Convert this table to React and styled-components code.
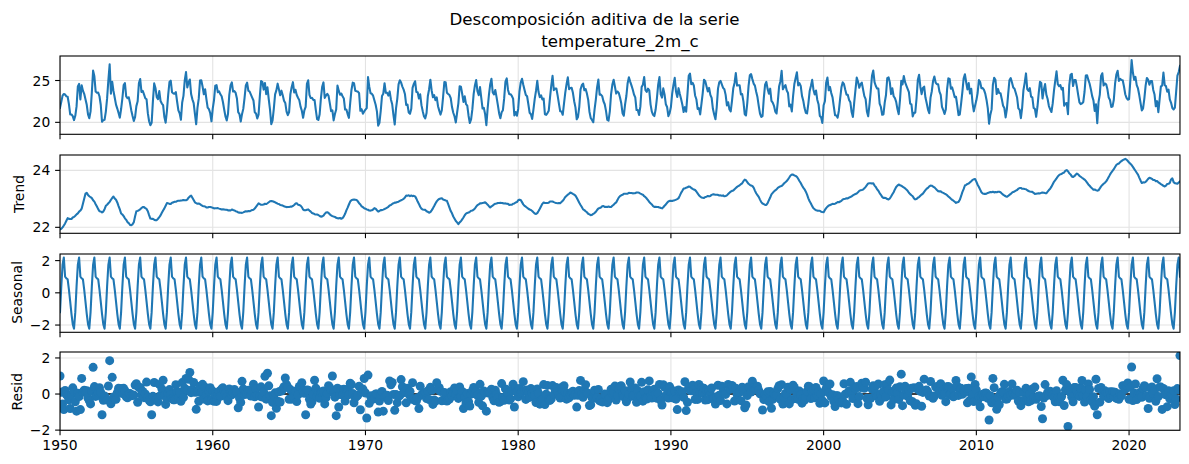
import React from 'react';
import styled, { createGlobalStyle } from 'styled-components';

const GlobalStyle = createGlobalStyle`
  html, body { margin: 0; padding: 0; background: #ffffff; }
  body { font-family: "DejaVu Sans", "Liberation Sans", sans-serif; color: #000; }
`;

const FIG_W = 1189;
const LABEL_COL = 35;
const AX_LEFT = 60 - LABEL_COL;
const AX_W = 1120;
const AX_H = 78.3;
const PANEL_H = 98.8;
const T0 = 1950;
const N = 881;
const T1 = T0 + (N - 1) / 12;
const BLUE = '#1f77b4';
const TICK = 4.9;
const PAD = 4.9;
const FS = 13.9;

function mulberry32(a) {
  return function () {
    a |= 0; a = (a + 0x6d2b79f5) | 0;
    let t = Math.imul(a ^ (a >>> 15), 1 | a);
    t = (t + Math.imul(t ^ (t >>> 7), 61 | t)) ^ t;
    return ((t ^ (t >>> 14)) >>> 0) / 4294967296;
  };
}
const rand = mulberry32(20240611);
const gauss = () => {
  const u = Math.max(rand(), 1e-9);
  const v = rand();
  return Math.sqrt(-2 * Math.log(u)) * Math.cos(2 * Math.PI * v);
};

const TREND_KEYS = [
  [1950.0, 21.93], [1950.3, 22.1], [1950.5, 22.32], [1950.7, 22.27], [1951.0, 22.4], [1951.4, 22.6],
  [1951.7, 23.23], [1952.0, 23.05], [1952.3, 22.85], [1952.6, 22.55], [1952.8, 22.5], [1953.0, 22.75],
  [1953.5, 23.07], [1953.7, 22.95], [1954.0, 22.5], [1954.3, 22.3], [1954.6, 22.08], [1954.8, 22.1],
  [1955.0, 22.55], [1955.5, 22.7], [1955.7, 22.65], [1955.9, 22.3], [1956.3, 22.22], [1956.6, 22.45],
  [1957.0, 22.85], [1957.2, 22.8], [1957.4, 22.88], [1957.9, 22.92], [1958.3, 22.95], [1958.6, 23.1],
  [1958.85, 22.85], [1959.6, 22.7], [1960.0, 22.72], [1960.5, 22.65], [1961.3, 22.6], [1961.9, 22.5],
  [1962.3, 22.6], [1962.7, 22.62], [1963.0, 22.85], [1963.5, 22.8], [1963.8, 22.95], [1964.2, 22.85],
  [1964.9, 22.68], [1965.06, 22.7], [1965.5, 22.86], [1965.93, 22.63], [1966.15, 22.66], [1966.7, 22.43],
  [1967.24, 22.41], [1967.46, 22.55], [1967.9, 22.37], [1968.44, 22.26], [1968.66, 22.49], [1968.99, 22.93],
  [1969.43, 22.93], [1969.75, 22.72], [1970.3, 22.6], [1970.62, 22.66], [1970.84, 22.55], [1971.39, 22.66],
  [1971.83, 22.84], [1972.26, 22.9], [1972.7, 23.13], [1973.24, 23.1], [1973.68, 22.66], [1974.23, 22.51],
  [1974.66, 22.9], [1974.99, 23.03], [1975.32, 22.95], [1975.75, 22.37], [1976.08, 22.08], [1976.63, 22.51],
  [1977.06, 22.6], [1977.5, 22.84], [1977.83, 22.9], [1978.15, 22.72], [1978.7, 22.87], [1979.25, 22.84],
  [1979.58, 22.81], [1980.12, 22.95], [1980.56, 22.7], [1981.2, 22.4], [1981.64, 22.86], [1982.3, 22.9],
  [1982.74, 22.84], [1982.95, 22.98], [1983.39, 23.19], [1983.7, 23.15], [1984.25, 22.6], [1984.8, 22.41],
  [1985.47, 22.72], [1986.12, 22.72], [1986.56, 23.01], [1987.0, 23.21], [1987.54, 23.19], [1987.87, 23.21],
  [1988.41, 23.01], [1988.85, 22.72], [1989.4, 22.7], [1989.83, 22.9], [1990.48, 23.01], [1990.81, 23.33],
  [1991.14, 23.44], [1991.58, 23.3], [1992.12, 22.98], [1992.45, 23.13], [1993.0, 23.15], [1993.54, 23.07],
  [1994.08, 23.3], [1994.85, 23.67], [1995.4, 23.42], [1995.94, 22.84], [1996.27, 22.81], [1996.81, 23.3],
  [1997.25, 23.44], [1997.9, 23.83], [1998.23, 23.8], [1998.78, 23.3], [1999.32, 22.66], [1999.65, 22.58],
  [1999.98, 22.52], [2000.31, 22.78], [2000.74, 22.81], [2001.18, 22.95], [2001.73, 23.07], [2002.27, 23.24],
  [2002.6, 23.33], [2002.93, 23.53], [2003.25, 23.53], [2003.91, 23.01], [2004.34, 23.03], [2004.89, 23.51],
  [2005.33, 23.36], [2005.98, 22.98], [2006.52, 23.19], [2006.96, 23.48], [2007.6, 23.28], [2008.16, 23.07],
  [2008.65, 22.86], [2008.93, 22.98], [2009.25, 23.48], [2009.91, 23.72], [2010.35, 23.19], [2011.0, 23.2],
  [2011.55, 23.25], [2011.99, 23.07], [2012.86, 23.39], [2013.3, 23.3], [2013.84, 23.19], [2014.6, 23.19],
  [2015.36, 23.8], [2015.91, 24.0], [2016.3, 23.75], [2016.57, 23.9], [2017.11, 23.68], [2017.66, 23.31],
  [2018.0, 23.32], [2018.53, 23.64], [2019.19, 24.2], [2019.73, 24.42], [2020.2, 24.15], [2020.6, 23.84],
  [2020.82, 23.54], [2021.0, 23.56], [2021.37, 23.75], [2022.02, 23.54], [2022.35, 23.4], [2022.7, 23.6],
  [2022.79, 23.8], [2022.94, 23.54], [2023.34, 23.54],
];

const SEASON = [-1.2, 0.4, 1.75, 2.19, 1.0, 0.9, 0.84, 0.2, -0.55, -1.3, -1.95, -2.23];

const OUTLIERS = [
  [1950.0, 1.0], [1950.7, -0.8], [1951.1, -0.95], [1952.18, 1.48], [1952.77, -1.15], [1953.23, 1.85],
  [1956.0, -1.15], [1958.5, 1.2], [1958.9, -0.85], [1963.4, 0.98], [1963.6, 1.15], [1963.8, -1.2],
  [1966.1, -1.15], [1967.8, 1.0], [1968.1, -1.2], [1970.1, -1.33], [1970.2, 1.05], [1970.84, -1.0],
  [1971.2, -0.95], [2005.1, 1.1], [2009.65, 0.95], [2010.85, -1.44], [2011.3, -0.85], [2014.3, -1.37],
  [2016.02, -1.8], [2016.9, 0.75], [2017.9, -1.15], [2020.2, 1.5], [2021.8, 0.85], [2023.33, 2.13],
];

function interp(t) {
  for (let k = 0; k < TREND_KEYS.length - 1; k++) {
    const [a, va] = TREND_KEYS[k];
    const [b, vb] = TREND_KEYS[k + 1];
    if (t >= a && t <= b) return va + ((t - a) / (b - a)) * (vb - va);
  }
  return TREND_KEYS[TREND_KEYS.length - 1][1];
}

const times = Array.from({ length: N }, (_, i) => T0 + i / 12);
const jitter = times.map(() => gauss() * 0.03);
const trend = times.map((t, i) => {
  const j = (jitter[Math.max(0, i - 1)] + jitter[i] + jitter[Math.min(N - 1, i + 1)]) / 3;
  return interp(t) + (i === 0 ? 0 : j);
});
const seasonal = times.map((_, i) => SEASON[i % 12]);
const drawResid = () => {
  let v = gauss() * 0.36;
  let tries = 0;
  while (Math.abs(v) > 0.95 && tries < 6) { v = gauss() * 0.36; tries++; }
  return Math.max(-0.95, Math.min(0.95, v));
};
const resid = times.map(() => drawResid());
OUTLIERS.forEach(([t, v]) => {
  const idx = Math.min(N - 1, Math.round((t - T0) * 12));
  resid[idx] = v;
});
const observed = times.map((_, i) => trend[i] + seasonal[i] + resid[i]);

const xOf = (t) => AX_LEFT + ((t - T0) / (T1 - T0)) * AX_W;
const XTICKS = [1950, 1960, 1970, 1980, 1990, 2000, 2010, 2020];
const fmt = (v) => (v < 0 ? '\u2212' + Math.abs(v) : String(v));

const Figure = styled.div`
  width: ${FIG_W}px;
  height: 464px;
  display: flex;
  flex-direction: column;
  background: #ffffff;
  overflow: hidden;
`;

const Header = styled.header`
  box-sizing: border-box;
  height: 56px;
  padding-top: 10px;
  display: flex;
  flex-direction: column;
`;

const SupTitle = styled.h1`
  margin: 0;
  font-weight: normal;
  font-size: 16.67px;
  line-height: 19.4px;
  text-align: center;
  width: ${FIG_W}px;
`;

const AxTitle = styled.h2`
  margin: 2.6px 0 0 60px;
  font-weight: normal;
  font-size: 16.67px;
  line-height: 19.4px;
  text-align: center;
  width: ${AX_W}px;
`;

const Panel = styled.section`
  display: grid;
  grid-template-columns: ${LABEL_COL}px 1fr;
  height: ${(p) => p.$h}px;
  flex: none;
`;

const YLabelCell = styled.div`
  height: ${AX_H}px;
  display: flex;
  align-items: center;
  justify-content: flex-start;
  padding-left: ${(p) => p.$inset}px;
  box-sizing: border-box;
`;

const YLabel = styled.span`
  writing-mode: vertical-rl;
  transform: rotate(180deg);
  font-size: ${FS}px;
  line-height: 16px;
  white-space: nowrap;
`;

const ChartSvg = styled.svg`
  display: block;
  overflow: visible;
`;

const TickText = styled.text`
  font-family: "DejaVu Sans", "Liberation Sans", sans-serif;
  font-size: ${FS}px;
  fill: #000;
`;

function Axes({ id, series, ylim, yticks, dots, xlabels, height, zeroLine }) {
  const [y0, y1] = ylim;
  const yOf = (v) => ((y1 - v) / (y1 - y0)) * AX_H;
  const width = FIG_W - LABEL_COL;
  const path = series
    .map((v, i) => `${i ? 'L' : 'M'}${xOf(times[i]).toFixed(2)} ${yOf(v).toFixed(2)}`)
    .join('');
  return (
    <ChartSvg width={width} height={height} viewBox={`0 0 ${width} ${height}`}>
      <defs>
        <clipPath id={id}>
          <rect x={AX_LEFT} y={0} width={AX_W} height={AX_H} />
        </clipPath>
      </defs>
      {XTICKS.map((t) => (
        <line key={'gx' + t} x1={xOf(t)} x2={xOf(t)} y1={0} y2={AX_H} stroke="#e3e3e3" strokeWidth={1.1} />
      ))}
      {yticks.map((v) => (
        <line key={'gy' + v} x1={AX_LEFT} x2={AX_LEFT + AX_W} y1={yOf(v)} y2={yOf(v)} stroke="#e3e3e3" strokeWidth={1.1} />
      ))}
      <g clipPath={`url(#${id})`}>
        {zeroLine && (
          <line x1={AX_LEFT} x2={AX_LEFT + AX_W} y1={yOf(0)} y2={yOf(0)} stroke="#000" strokeWidth={1.5} />
        )}
        {dots ? (
          series.map((v, i) => <circle key={i} cx={xOf(times[i])} cy={yOf(v)} r={4.5} fill={BLUE} />)
        ) : (
          <path d={path} fill="none" stroke={BLUE} strokeWidth={2.08} strokeLinejoin="round" strokeLinecap="square" />
        )}
      </g>
      {XTICKS.map((t) => (
        <line key={'tx' + t} x1={xOf(t)} x2={xOf(t)} y1={AX_H} y2={AX_H + TICK} stroke="#000" strokeWidth={1.1} />
      ))}
      {yticks.map((v) => (
        <line key={'ty' + v} x1={AX_LEFT - TICK} x2={AX_LEFT} y1={yOf(v)} y2={yOf(v)} stroke="#000" strokeWidth={1.1} />
      ))}
      <rect x={AX_LEFT} y={0} width={AX_W} height={AX_H} fill="none" stroke="#000" strokeWidth={1.1} />
      {yticks.map((v) => (
        <TickText key={'ly' + v} x={AX_LEFT - TICK - PAD} y={yOf(v) + 5.07} textAnchor="end">
          {fmt(v)}
        </TickText>
      ))}
      {xlabels &&
        XTICKS.map((t) => (
          <TickText key={'lx' + t} x={xOf(t)} y={AX_H + TICK + PAD + 10.1} textAnchor="middle">
            {t}
          </TickText>
        ))}
    </ChartSvg>
  );
}

const PANELS = [
  { id: 'obs', label: '', inset: 0, series: observed, ylim: [18.57, 27.93], yticks: [20, 25] },
  { id: 'trend', label: 'Trend', inset: 11.2, series: trend, ylim: [21.79, 24.54], yticks: [22, 24] },
  { id: 'seas', label: 'Seasonal', inset: 8.9, series: seasonal, ylim: [-2.45, 2.41], yticks: [-2, 0, 2] },
  { id: 'resid', label: 'Resid', inset: 8.9, series: resid, ylim: [-2.01, 2.33], yticks: [-2, 0, 2], dots: true, zeroLine: true, xlabels: true },
];

export default function App() {
  return (
    <>
      <GlobalStyle />
      <Figure>
        <Header>
          <SupTitle>Descomposición aditiva de la serie</SupTitle>
          <AxTitle>temperature_2m_c</AxTitle>
        </Header>
        {PANELS.map((p, k) => {
          const h = k === PANELS.length - 1 ? 464 - 56 - PANEL_H * 3 : PANEL_H;
          return (
            <Panel key={p.id} $h={h}>
              <YLabelCell $inset={p.inset}>{p.label && <YLabel>{p.label}</YLabel>}</YLabelCell>
              <Axes
                id={p.id}
                series={p.series}
                ylim={p.ylim}
                yticks={p.yticks}
                dots={p.dots}
                zeroLine={p.zeroLine}
                xlabels={p.xlabels}
                height={h}
              />
            </Panel>
          );
        })}
      </Figure>
    </>
  );
}
